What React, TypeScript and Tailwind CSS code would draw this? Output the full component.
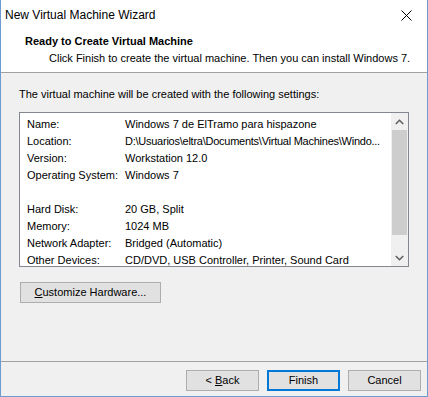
import React from 'react';

const rows: [string, string][] = [
  ['Name:', 'Windows 7 de ElTramo para hispazone'],
  ['Location:', 'D:\\Usuarios\\eltra\\Documents\\Virtual Machines\\Windo...'],
  ['Version:', 'Workstation 12.0'],
  ['Operating System:', 'Windows 7'],
  ['', ''],
  ['Hard Disk:', '20 GB, Split'],
  ['Memory:', '1024 MB'],
  ['Network Adapter:', 'Bridged (Automatic)'],
  ['Other Devices:', 'CD/DVD, USB Controller, Printer, Sound Card'],
];

const font = { fontFamily: '"Liberation Sans", Arial, sans-serif' };

const WinButton: React.FC<{ children: React.ReactNode; primary?: boolean; className?: string }> = ({
  children,
  primary,
  className = '',
}) => (
  <button
    className={
      'h-[21px] bg-[#e1e1e1] text-[11px] text-black flex items-center justify-center whitespace-nowrap ' +
      (primary ? 'border-2 border-[#0078d7] ' : 'border border-[#adadad] ') +
      className
    }
  >
    {children}
  </button>
);

export default function App() {
  return (
    <div
      style={font}
      className="w-[428px] h-[397px] flex flex-col bg-[#f0f0f0] border border-t-0 border-[#6e9bd1] text-[11px] text-black overflow-hidden"
    >
      {/* title bar */}
      <div className="h-[30px] bg-white flex items-center justify-between pl-[4px] pr-[15px] text-[12px]">
        <span>New Virtual Machine Wizard</span>
        <svg width="11" height="11" viewBox="0 0 11 11">
          <path d="M0.5 0.5 L10.5 10.5 M10.5 0.5 L0.5 10.5" stroke="#000" strokeWidth="1" />
        </svg>
      </div>

      {/* header */}
      <div className="h-[43px] bg-white border-b border-[#a0a0a0] pl-[24px] pt-[3px] whitespace-nowrap">
        <div className="font-bold leading-[17px]">Ready to Create Virtual Machine</div>
        <div className="pl-[24px] leading-[17px]">
          Click Finish to create the virtual machine. Then you can install Windows 7.
        </div>
      </div>

      {/* body */}
      <div className="flex-1 flex flex-col px-[18px]">
        <div className="mt-[14px] leading-[15px] whitespace-nowrap">
          The virtual machine will be created with the following settings:
        </div>

        <div className="mt-[10px] h-[155px] bg-white border border-[#828790] flex">
          <div className="flex-1 min-w-0 pl-[7px] pt-[3px]">
            {rows.map(([k, v], i) => (
              <div key={i} className="h-[17px] flex items-center whitespace-nowrap">
                <span className="w-[98px] shrink-0">{k}</span>
                <span className={i === 1 ? 'tracking-[-0.25px]' : ''}>{v}</span>
              </div>
            ))}
          </div>
          <div className="w-[17px] flex flex-col bg-[#f0f0f0]">
            <div className="h-[17px] flex items-center justify-center">
              <svg width="9" height="6" viewBox="0 0 9 6">
                <path d="M0.8 5 L4.5 1.3 L8.2 5" fill="none" stroke="#606060" strokeWidth="1.6" />
              </svg>
            </div>
            <div className="mx-[1px] h-[105px] bg-[#cdcdcd]" />
            <div className="flex-1" />
            <div className="h-[17px] flex items-center justify-center">
              <svg width="9" height="6" viewBox="0 0 9 6">
                <path d="M0.8 1 L4.5 4.7 L8.2 1" fill="none" stroke="#606060" strokeWidth="1.6" />
              </svg>
            </div>
          </div>
        </div>

        <WinButton className="mt-[15px] w-[141px] self-start ml-[1px]">
          <span>
            <u>C</u>ustomize Hardware...
          </span>
        </WinButton>
      </div>

      {/* footer */}
      <div className="h-[35px] border-t border-[#a0a0a0] flex items-start justify-end gap-[8px] pt-[8px] pr-[6px]">
        <WinButton className="w-[73px]">
          <span>
            &lt; <u>B</u>ack
          </span>
        </WinButton>
        <WinButton primary className="w-[73px]">
          Finish
        </WinButton>
        <WinButton className="w-[73px]">Cancel</WinButton>
      </div>
    </div>
  );
}
